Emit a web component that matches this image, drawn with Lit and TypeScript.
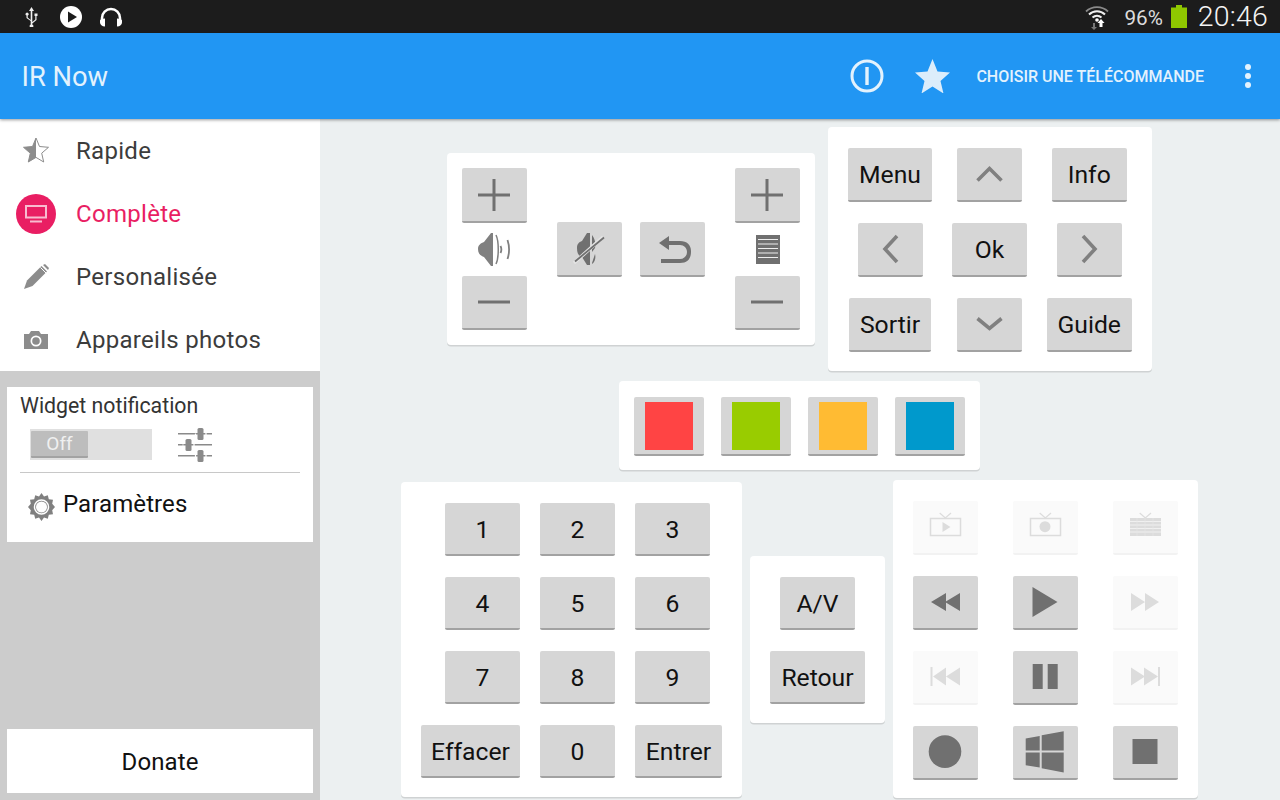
import { LitElement, html, css, svg } from "lit";
import { customElement } from "lit/decorators.js";

const ico = (w: number, h: number, body: unknown) =>
  html`<svg width=${w} height=${h} viewBox="0 0 ${w} ${h}">${body}</svg>`;

const btnIcon = (body: unknown) => ico(65, 54, body);
const G = "#707070";
const D = "#dcdcdc";
const plus = svg`<path d="M16 25.5h32v3H16zM30.5 11h3v32h-3z" fill=${G}/>`;
const minus = svg`<path d="M16 25.5h32v3H16z" fill=${G}/>`;
const mute = svg`<g fill=${G}><path d="M20 26c0-4 2-6 5-7l5-8h3v32h-3l-5-8c-3-1-5-3-5-9z"/><path d="M35 13c3 4 4 9 3 13l-3 4zM35 41l3-9c1 4 0 8-3 10z"/></g><path d="M17 41L46 15" stroke="#e4e4e4" stroke-width="3.500"/><path d="M18 39.500L47 15.500" stroke=${G} stroke-width="1.800"/>`;
const undo = svg`<path d="M19 16l10-7v5h11c7 0 11 4 11 10v1c0 7-4 11-11 11H21v-4h19c4 0 7-3 7-7s-3-7-7-7H29v5z" fill=${G} transform="translate(0 5)"/>`;
const chev = (d: string) => svg`<path d=${d} fill="none" stroke="#808080" stroke-width="3.6"/>`;
const rewind = svg`<path d="M18 27l15-9v18zM32 27l15-9v18z" fill=${G}/>`;
const play = svg`<path d="M19.5 12l25 15-25 15z" fill=${G}/>`;
const fwd = svg`<path d="M18 18l14 9-14 9zM32 18l14 9-14 9z" fill=${D}/>`;
const prev = svg`<path d="M17.5 17h2v19h-2zM20 26.5l13-9v18zM33 26.5l14-9v18z" fill=${D}/>`;
const next = svg`<path d="M45 17h2v19h-2zM18 17.500l14 9-14 9zM31 17.500l14 9-14 9z" fill=${D}/>`;
const pause = svg`<path d="M19.700 14h10v25h-10zM34.700 14h10v25h-10z" fill=${G}/>`;
const rec = svg`<circle cx="32" cy="26.600" r="16.300" fill=${G}/>`;
const win = svg`<path d="M12.700 13.600L26.700 11V25.600H12.700zM28.700 10.300L50.700 6.300V25.600H28.700zM12.700 27.600H26.700V42.600L12.700 40.300zM28.700 27.600H50.700V47.600L28.700 43.300z" fill=${G}/>`;
const stop = svg`<path d="M19.500 14h25v25h-25z" fill=${G}/>`;
const tvFrame = svg`<rect x="17.500" y="18.500" width="30" height="17" fill="none" stroke=${D} stroke-width="1.500"/><path d="M26.700 13l5.600 5 5.700-5" fill="none" stroke=${D} stroke-width="1.200"/>`;
const tvPlay = svg`${tvFrame}<path d="M29.500 22l8 5-8 5z" fill=${D}/>`;
const tvRec = svg`${tvFrame}<circle cx="32" cy="26.700" r="5.500" fill=${D}/>`;
const tvGuide = svg`<rect x="17" y="18" width="31" height="18" fill=${D}/><path d="M26.700 13l5.600 5 5.700-5" fill="none" stroke=${D} stroke-width="1.200"/><path d="M17 21.500h31M17 25h31M17 28.500h31M17 32h31" stroke="#f0f0f0" stroke-width="1"/><path d="M24 18v18M32 18v18M40 18v18" stroke="#e8e8e8" stroke-width=".6"/>`;

interface Btn { w: number; label?: string; icon?: unknown; off?: boolean; }

@customElement("app-root")
export class AppRoot extends LitElement {
  static styles = css`
    :host { display: block; width: 1280px; height: 800px; overflow: hidden; font-family: Roboto, "Liberation Sans", sans-serif; background: #ecf0f1; }
    svg { display: block; flex: none; }
    .status { height: 33px; background: #1c1c1c; display: flex; align-items: center; padding: 0 12px 0 25px; color: #e4e4e4; }
    .status-left { display: flex; align-items: center; }
    .usb { margin-right: 22px; }
    .playc { margin-right: 17px; }
    .status-right { margin-left: auto; display: flex; align-items: center; }
    .pct { font-size: 20.700px; margin: 2px 8px 0 15px; color: #dcdcdc; }
    .time { font-size: 28.500px; font-weight: 300; color: #f4f4f4; margin-left: 11px; letter-spacing: 0.2px; }
    .bar { height: 86px; background: #2196f3; display: flex; align-items: center; padding-left: 21.500px; color: #e3f2fd; position: relative; z-index: 2; box-shadow: 0 1px 3px rgba(0,0,0,.4); }
    .title { font-size: 27.300px; font-weight: 400; color: #e3f2fd; padding-top: 2px; }
    .bar-right { margin-left: auto; display: flex; align-items: center; }
    .star { margin: 0 26px 0 31px; }
    .choose { font-size: 16px; font-weight: 500; color: #e3f2fd; margin-right: 41px; }
    .dots { margin-right: 29px; }
    .body { display: flex; height: 681px; }
    .side { width: 320px; background: #cccccc; display: flex; flex-direction: column; flex: none; padding-bottom: 7px; box-sizing: border-box; }
    .nav { background: #fff; height: 252px; flex: none; }
    .item { height: 63px; display: flex; align-items: center; padding-left: 16px; font-size: 24px; letter-spacing: 0.3px; color: #3c3c3c; }
    .item.on { color: #e91e63; }
    .ic { width: 40px; height: 40px; display: flex; align-items: center; justify-content: center; margin-right: 20px; border-radius: 50%; }
    .on .ic { background: #e91e63; }
    .widget { background: #fff; margin: 16px 7px 0; height: 155px; padding: 0 13px; box-sizing: border-box; }
    .w-title { font-size: 21.300px; color: #333; padding-top: 6px; line-height: 26px; }
    .w-row { display: flex; align-items: center; padding: 8.500px 0 0 10px; height: 34.500px; }
    .toggle { width: 122px; height: 31px; background: #e0e0e0; box-sizing: border-box; padding: 2px 0 2px 1px; }
    .thumb { width: 57px; height: 27px; background: #bdbdbd; border-bottom: 2px solid #a3a3a3; box-sizing: border-box; color: #f0f0f0; font-size: 19px; text-align: center; line-height: 25px; border-radius: 1px; }
    .sliders { margin: 0 0 0 26px; }
    .divider { height: 1px; background: #c8c8c8; margin-top: 10px; }
    .params { display: flex; align-items: flex-start; padding: 20px 0 0 8px; font-size: 24px; color: #111; }
    .gear { margin-top: -1px; }
    .params .label { line-height: 22px; margin-left: 8px; letter-spacing: 0.1px; }
    .donate { margin: auto 7px 0; height: 64px; background: #fff; display: flex; align-items: center; justify-content: center; font-size: 24px; letter-spacing: 0.1px; color: #111; flex: none; padding-top: 2px; box-sizing: border-box; }
    .main { flex: 1; padding: 8px 1px 0 0; display: flex; flex-direction: column; align-items: center; gap: 10px; }
    .row { display: flex; align-items: center; }
    .row.a { gap: 13px; }
    .row.c { gap: 8px; }
    .card { background: #fff; border-radius: 4px; box-shadow: 0 1.500px 0 #cfd2d3; box-sizing: border-box; }
    .btn { background: #d6d6d6; border-bottom: 2px solid #a2a2a2; border-radius: 2px; box-sizing: border-box; display: flex; align-items: center; justify-content: center; height: 54px; font-size: 24.700px; color: #111; flex: none; }
    .btn.off { background: #fafafa; border-bottom-color: #f2f2f2; }
    .vol { width: 368px; height: 192px; padding: 15px; display: flex; justify-content: space-between; }
    .vcol { display: flex; flex-direction: column; align-items: center; width: 65px; }
    .vmid { display: flex; gap: 18px; align-items: center; height: 163px; }
    .nicon { height: 54px; display: flex; align-items: center; justify-content: center; }
    .nav-card { width: 324px; height: 244px; padding: 21px 0 0 12px; display: grid; grid-template-columns: 100px 99px 100.500px; grid-auto-rows: 54px; row-gap: 21px; justify-items: center; }
    .nav-card .btn { padding-top: 1px; }
    .nav-card .ib { padding-top: 0; }
    .colors { width: 361px; height: 89px; padding: 15.500px 15px; display: flex; gap: 17px; }
    .cbtn { width: 70px; height: 59px; align-items: flex-start; padding-top: 5px; }
    .sw { width: 48px; height: 48px; }
    .num { width: 341px; height: 315px; padding: 21px 20px; display: grid; grid-template-columns: 99px 75px 87px; grid-auto-rows: 53px; gap: 21px 20px; }
    .num .btn, .av .btn { height: 53px; padding-top: 2px; }
    .num .btn:nth-child(3n+1) { justify-self: end; }
    .num .btn:nth-child(3n) { justify-self: start; }
    .av { width: 135px; height: 167px; padding: 21px 0; display: flex; flex-direction: column; gap: 21px; align-items: center; }
    .media { width: 305px; height: 318px; padding: 21px 20px; display: grid; grid-template-columns: repeat(3, 65px); grid-auto-rows: 54px; gap: 21px 35px; }
  `;

  private b(x: Btn) {
    return html`<div class="btn ${x.off ? "off" : ""} ${x.icon ? "ib" : ""}" style="width:${x.w}px">${x.label ?? x.icon}</div>`;
  }

  render() {
    const navBtns: Btn[] = [
      { w: 84, label: "Menu" }, { w: 65, icon: btnIcon(chev("M20.500 33.500L32.500 21.500l12 12")) }, { w: 75, label: "Info" },
      { w: 65, icon: btnIcon(chev("M39 14L27 27l12 13")) }, { w: 75, label: "Ok" }, { w: 65, icon: btnIcon(chev("M26 14l12 13-12 13")) },
      { w: 82, label: "Sortir" }, { w: 65, icon: btnIcon(chev("M20.500 21.500l12 10 12-10")) }, { w: 85, label: "Guide" },
    ];
    const nums = ["1","2","3","4","5","6","7","8","9","Effacer","0","Entrer"];
    const widths = [75,75,75,75,75,75,75,75,75,99,75,87];
    const media: Btn[] = [
      { w: 65, off: true, icon: btnIcon(tvPlay) }, { w: 65, off: true, icon: btnIcon(tvRec) }, { w: 65, off: true, icon: btnIcon(tvGuide) },
      { w: 65, icon: btnIcon(rewind) }, { w: 65, icon: btnIcon(play) }, { w: 65, off: true, icon: btnIcon(fwd) },
      { w: 65, off: true, icon: btnIcon(prev) }, { w: 65, icon: btnIcon(pause) }, { w: 65, off: true, icon: btnIcon(next) },
      { w: 65, icon: btnIcon(rec) }, { w: 65, icon: btnIcon(win) }, { w: 65, icon: btnIcon(stop) },
    ];
    const colors = ["#ff4444", "#99cc00", "#ffbb33", "#0099cc"];
    return html`
      <div class="status">
        <div class="status-left">
          <span class="usb">${ico(13, 20, svg`<path d="M6.500 0l2.500 4H7.300v11l3-2.500V9H9.500V6.500h3V9h-1v4l-4.200 3.500v1a1.800 1.800 0 1 1-1.600 0V14L1.500 11V8.500a1.500 1.500 0 1 1 1.200 0V10.500l3 2.500V4H4z" fill="#eee"/>`)}</span>
          <span class="playc">${ico(22, 22, svg`<circle cx="11" cy="11" r="11" fill="#fff"/><path d="M8 5.500l9 5.500-9 5.500z" fill="#1c1c1c"/>`)}</span>
          ${ico(24, 22, svg`<path d="M3 15v-3a9 9 0 0 1 18 0v3" fill="none" stroke="#fff" stroke-width="2.500"/><path d="M1 14.500c0-1 2-2 5-2v8c-3 0-5-2-5-4zM23 14.500c0-1-2-2-5-2v8c3 0 5-2 5-4z" fill="#fff"/>`)}
        </div>
        <div class="status-right">
          ${ico(24, 27, svg`<g fill="none"><path d="M1 8.500a16 16 0 0 1 22 0" stroke="#8a8a8a" stroke-width="1.800"/><path d="M4 11.500a11.500 11.500 0 0 1 16 0" stroke="#f0f0f0" stroke-width="2"/><path d="M7.500 14.500a7 7 0 0 1 9 0" stroke="#f0f0f0" stroke-width="2"/></g><circle cx="12" cy="17" r="1.800" fill="#fff"/><path d="M14.500 24v-4h-2l3.500-4 3.500 4h-2v4z" fill="#fff"/><path d="M8 20v4H6l3 3 3-3h-2v-4z" fill="#777"/>`)}
          <span class="pct">96%</span>
          ${ico(16, 23, svg`<path d="M5 0h6v2.500h5V23H0V2.500h5z" fill="#8fc800"/>`)}
          <span class="time">20:46</span>
        </div>
      </div>
      <div class="bar">
        <span class="title">IR Now</span>
        <div class="bar-right">
          ${ico(34, 34, svg`<circle cx="17" cy="17" r="15" fill="none" stroke="#e3f2fd" stroke-width="3"/><rect x="15.300" y="8" width="3.400" height="18" fill="#e3f2fd"/>`)}
          <span class="star">${ico(35, 34, svg`<path d="M17.500 0l5 12.500 12.500 1-9.500 8.500 3 12.500-11-7-11 7 3-12.500L0 13.500l12.500-1z" fill="#dcedfb"/>`)}</span>
          <span class="choose">CHOISIR UNE TÉLÉCOMMANDE</span>
          <span class="dots">${ico(6, 24, svg`<circle cx="3" cy="3" r="3" fill="#e3f2fd"/><circle cx="3" cy="12" r="3" fill="#e3f2fd"/><circle cx="3" cy="21" r="3" fill="#e3f2fd"/>`)}</span>
        </div>
      </div>
      <div class="body">
        <aside class="side">
          <nav class="nav">
            <div class="item"><span class="ic">${ico(26, 25, svg`<path d="M13 0l3.500 8.500 9 .8-6.800 5.900 2 8.800L13 19.400 5.300 24l2-8.800L.5 9.300l9-.8z" fill="#fff" stroke="#8c8c8c" stroke-width="1"/><path d="M13 0v19.400L5.300 24l2-8.800L.5 9.300l9-.8z" fill="#8c8c8c"/>`)}</span>Rapide</div>
            <div class="item on"><span class="ic">${ico(24, 20, svg`<path d="M2 2h20v11.500H2z" fill="none" stroke="#f8bbd0" stroke-width="2"/><rect x="6" y="16.500" width="12" height="2" fill="#f8bbd0"/>`)}</span>Complète</div>
            <div class="item"><span class="ic">${ico(25, 25, svg`<path d="M0 25l3-8.500L17.500 2l5.500 5.500L8.500 22z" fill="#8c8c8c"/><path d="M19 1l2-1 4 4-1 2z" fill="#8c8c8c"/><path d="M16.500 3.500l5.500 5.500" stroke="#fff" stroke-width="1"/>`)}</span>Personalisée</div>
            <div class="item"><span class="ic">${ico(24, 18, svg`<path d="M0 3h5l2-3h8l2 3h7v15H0z" fill="#8c8c8c"/><circle cx="12" cy="10" r="5.500" fill="#fff"/><circle cx="12" cy="10" r="3.800" fill="#8c8c8c"/>`)}</span>Appareils photos</div>
          </nav>
          <div class="widget">
            <div class="w-title">Widget notification</div>
            <div class="w-row">
              <div class="toggle"><div class="thumb">Off</div></div>
              <span class="sliders">${ico(34, 34, svg`<g fill="#8a8a8a"><path d="M0 5h34v1.500H0zM0 16h34v1.500H0zM0 27h34v1.500H0z"/><rect x="19.500" y="0" width="6" height="12" rx="1.500"/><rect x="7.500" y="11" width="6" height="12" rx="1.500"/><rect x="19.500" y="22" width="6" height="12" rx="1.500"/></g><g stroke="#fff" stroke-width="1.200"><path d="M17.500 5.500v2M5 16.500v1M16 16v2M28 5v2M28 27v2M17.500 27v2"/></g>`)}</span>
            </div>
            <div class="divider"></div>
            <div class="params">
              <span class="gear">${ico(27, 30, svg`<path d="M13.500 1l2.500 3.500 3.800-1.200 1 3.900 4.200.6-.8 4 2.800 3.200-2.800 3.200.8 4-4.200.6-1 3.900-3.800-1.200L13.500 29 11 25.500l-3.800 1.200-1-3.900-4.200-.6.800-4L0 15l2.800-3.200-.8-4 4.200-.6 1-3.900L11 4.500z" fill="#808080"/><circle cx="13.500" cy="15" r="7" fill="none" stroke="#fff" stroke-width="1.500"/><circle cx="13.500" cy="15" r="5.500" fill="#fff"/>`)}</span>
              <span class="label">Paramètres</span>
            </div>
          </div>
          <div class="donate">Donate</div>
        </aside>
        <main class="main">
          <div class="row a">
            <div class="card vol">
              <div class="vcol">
                <div class="btn" style="width:65px;height:55px">${btnIcon(plus)}</div>
                <div class="nicon">${ico(33, 33, svg`<path d="M0 16c0-4 3-6 6-7l7-9h2v33h-2l-7-9c-3-1-6-3-6-8z" fill="#808080"/><path d="M18 2c3 6 3 23 0 29" stroke="#808080" fill="none" stroke-width="1.500"/><path d="M22.500 13c1 2 1 5 0 7M29.500 7c2 6 2 13 0 19" stroke="#808080" fill="none" stroke-width="1.800"/>`)}</div>
                <div class="btn" style="width:65px">${btnIcon(minus)}</div>
              </div>
              <div class="vmid">
                <div class="btn" style="width:65px;height:55px">${btnIcon(mute)}</div>
                <div class="btn" style="width:65px;height:55px">${btnIcon(undo)}</div>
              </div>
              <div class="vcol">
                <div class="btn" style="width:65px;height:55px">${btnIcon(plus)}</div>
                <div class="nicon">${ico(24, 29, svg`<path d="M0 0h24v29H0z" fill="#707070"/><path d="M2 4.500h20M2 9h20M2 13.500h20M2 18h20M2 22.500h20" stroke="#eee" stroke-width="1.200"/>`)}</div>
                <div class="btn" style="width:65px">${btnIcon(minus)}</div>
              </div>
            </div>
            <div class="card nav-card">${navBtns.map((x) => this.b(x))}</div>
          </div>
          <div class="card colors">
            ${colors.map((c) => html`<div class="btn cbtn"><div class="sw" style="background:${c}"></div></div>`)}
          </div>
          <div class="row c">
            <div class="card num">${nums.map((n, i) => this.b({ w: widths[i], label: n }))}</div>
            <div class="card av">
              ${this.b({ w: 75, label: "A/V" })}
              ${this.b({ w: 95, label: "Retour" })}
            </div>
            <div class="card media">${media.map((x) => this.b(x))}</div>
          </div>
        </main>
      </div>
    `;
  }
}
